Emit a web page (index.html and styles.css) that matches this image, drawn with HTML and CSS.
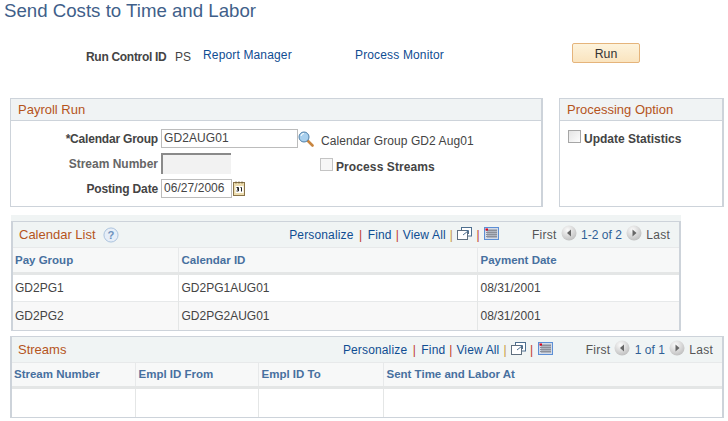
FILE: index.html
```html
<!DOCTYPE html>
<html lang="en">
<head>
<meta charset="utf-8">
<title>Send Costs to Time and Labor</title>
<link rel="stylesheet" href="styles.css">
</head>
<body>
<svg width="0" height="0" class="defs">
  <defs>
    <radialGradient id="orb" cx="40%" cy="30%" r="75%"><stop offset="0" stop-color="#fbfbfb"/><stop offset="1" stop-color="#bdbdbd"/></radialGradient>
    <symbol id="prev" viewBox="0 0 16 16"><circle cx="8" cy="8" r="7.5" fill="url(#orb)"/><path d="M10 4.5v7L6 8z" fill="#666"/></symbol>
    <symbol id="next" viewBox="0 0 16 16"><circle cx="8" cy="8" r="7.5" fill="url(#orb)"/><path d="M6.5 4.5v7l4-3.500z" fill="#666"/></symbol>
    <symbol id="zoom" viewBox="0 0 15 13"><rect x="4.500" y="0.500" width="10" height="8.500" fill="#fff" stroke="#4e6f8f"/><rect x="0.500" y="3.500" width="10" height="9" fill="#fff" stroke="#5f6f7f"/><path d="M6 8l5-4M8 3.500h3.500V7" fill="none" stroke="#4e6f8f"/></symbol>
    <symbol id="sheet" viewBox="0 0 15 13"><rect x="0.500" y="0.500" width="14" height="12" fill="#d3dbe8" stroke="#5c8fd6"/><path d="M2 3.500h11M2 5.500h11M2 7.500h11M2 9.500h11M4 2v9M6 2v9M8 2v9M10 2v9M12 2v9" stroke="#8b8f99" stroke-width="1"/><rect x="1.500" y="1.500" width="2.500" height="2" fill="#e0001b"/></symbol>
  </defs>
</svg>

<h1 class="page-title">Send Costs to Time and Labor</h1>

<div class="toolbar">
  <span class="label rc-label">Run Control ID</span>
  <span class="text rc-value">PS</span>
  <a class="link rm-link" href="#">Report Manager</a>
  <a class="link pm-link" href="#">Process Monitor</a>
  <button class="run-btn" type="button">Run</button>
</div>

<div class="panels">
  <section class="panel payroll">
    <h2 class="panel-head">Payroll Run</h2>
    <div class="form">
      <div class="form-row row-cal">
        <label class="label field-label cal-label">*Calendar Group</label>
        <span class="input input-cal">GD2AUG01</span>
        <svg class="lens" width="16" height="16" viewBox="0 0 16 16"><path d="M9.500 9.500L14.500 14.500" stroke="#c8853f" stroke-width="2.600" stroke-linecap="round"/><circle cx="6" cy="6" r="5" fill="#a9d0ee" stroke="#4f7fa8"/><path d="M3 5a3 3 0 0 1 3-2.500" stroke="#fff" fill="none"/></svg>
        <span class="text cal-desc">Calendar Group GD2 Aug01</span>
      </div>
      <div class="form-row row-stream">
        <label class="label field-label muted">Stream Number</label>
        <span class="input-disabled"></span>
        <span class="check disabled"></span>
        <span class="label check-label ps-label">Process Streams</span>
      </div>
      <div class="form-row row-date">
        <label class="label field-label date-label">Posting Date</label>
        <span class="input input-date">06/27/2006</span>
        <svg class="cal-icon" width="13" height="15" viewBox="0 0 13 15"><rect x="0.500" y="1.500" width="11" height="13" fill="#ecdcae" stroke="#8a7448"/><rect x="2.500" y="5" width="8" height="7" fill="#fff"/><path d="M3 0.500v2M6 0.500v2M9 0.500v2" stroke="#6b5a36"/><path d="M3.500 6.500h2v1.500h-1.500h1.500v2h-2M7.500 6.500h1v4" fill="none" stroke="#222"/></svg>
      </div>
    </div>
  </section>
  <section class="panel processing">
    <h2 class="panel-head">Processing Option</h2>
    <div class="option">
      <span class="check"></span>
      <span class="label check-label">Update Statistics</span>
    </div>
  </section>
</div>

<div class="calendar-wrap">
  <section class="grid grid-calendar">
    <div class="grid-head">
      <h2 class="grid-title">Calendar List</h2>
      <svg class="help" width="16" height="16" viewBox="0 0 17 17"><circle cx="8.500" cy="8.500" r="7.500" fill="#e6eef8" stroke="#a8c0dc"/><text x="8.500" y="12.500" text-anchor="middle" class="help-q">?</text></svg>
      <nav class="grid-nav">
        <a class="link" href="#">Personalize</a><i class="sep sep-wide">|</i><a class="link" href="#">Find</a><i class="sep">|</i><a class="link" href="#">View All</a><i class="sep sep-gold">|</i><svg class="nav-icon" width="15" height="13"><use href="#zoom"/></svg><i class="sep sep-icon">|</i><svg class="nav-icon" width="15" height="13"><use href="#sheet"/></svg>
        <span class="pager pager-cal"><span class="pg-word">First</span><svg class="orb" width="16" height="16"><use href="#prev"/></svg><span class="pg-count">1-2 of 2</span><svg class="orb" width="16" height="16"><use href="#next"/></svg><span class="pg-word">Last</span></span>
      </nav>
    </div>
    <table class="table">
      <colgroup><col class="c-a"><col class="c-b"><col></colgroup>
      <thead><tr><th>Pay Group</th><th>Calendar ID</th><th>Payment Date</th></tr></thead>
      <tbody>
        <tr class="odd"><td>GD2PG1</td><td>GD2PG1AUG01</td><td>08/31/2001</td></tr>
        <tr class="even"><td>GD2PG2</td><td>GD2PG2AUG01</td><td>08/31/2001</td></tr>
      </tbody>
    </table>
  </section>
</div>

<section class="grid grid-streams">
  <div class="grid-head">
    <h2 class="grid-title">Streams</h2>
    <nav class="grid-nav">
      <a class="link" href="#">Personalize</a><i class="sep sep-wide">|</i><a class="link" href="#">Find</a><i class="sep">|</i><a class="link" href="#">View All</a><i class="sep sep-gold">|</i><svg class="nav-icon" width="15" height="13"><use href="#zoom"/></svg><i class="sep sep-icon">|</i><svg class="nav-icon" width="15" height="13"><use href="#sheet"/></svg>
      <span class="pager pager-str"><span class="pg-word">First</span><svg class="orb" width="16" height="16"><use href="#prev"/></svg><span class="pg-count">1 of 1</span><svg class="orb" width="16" height="16"><use href="#next"/></svg><span class="pg-word">Last</span></span>
    </nav>
  </div>
  <table class="table table-streams">
    <colgroup><col class="s-a"><col class="s-b"><col class="s-c"><col></colgroup>
    <thead><tr><th>Stream Number</th><th>Empl ID From</th><th>Empl ID To</th><th>Sent Time and Labor At</th></tr></thead>
    <tbody><tr class="odd blank"><td></td><td></td><td></td><td></td></tr></tbody>
  </table>
</section>
</body>
</html>
```

FILE: styles.css
```css
* { box-sizing: border-box; }
html, body { margin: 0; padding: 0; }
body {
  width: 728px; height: 421px; overflow: hidden; background: #fff;
  font-family: "Liberation Sans", Arial, sans-serif; font-size: 12px; color: #444;
}
.defs { position: absolute; }
a { text-decoration: none; }
.page-title {
  margin: 0; padding: 0 0 0 4px; height: 43px; line-height: 22px;
  font-size: 18.670px; font-weight: normal; color: #3f5f8a;
}
.link { color: #0f4d92; letter-spacing: .15px; }
.label { font-weight: bold; color: #444; }
.text { color: #444; }

.toolbar { display: flex; align-items: flex-start; height: 55px; padding-left: 86px; }
.rc-label { margin-top: 7px; width: 89px; letter-spacing: -.3px; }
.rc-value { margin-top: 7px; width: 28px; }
.rm-link { margin-top: 5px; width: 152px; }
.pm-link { margin-top: 5px; width: 217px; }
.run-btn {
  width: 68px; height: 20px; padding: 1px 0 0; font: 12.300px "Liberation Sans", Arial, sans-serif; color: #333;
  border: 1px solid #e5b47b; border-radius: 2px;
  background: linear-gradient(#fdf3dc, #fae4bf);
}

.panels { display: flex; gap: 16px; padding-left: 10px; height: 117px; }
.panel { border: 1px solid #cdd3da; height: 109px; border-width: 1px 2px 1px 1px; }
.payroll { width: 533px; }
.processing { width: 165px; }
.panel-head {
  margin: 0; height: 21px; line-height: 21px; padding-left: 7px; font-size: 13px; font-weight: normal;
  color: #b5541c; background: #f0f3f4; border-bottom: 1px solid #cdd3da; box-sizing: content-box;
}
.form { padding-top: 5px; }
.form-row { display: flex; align-items: center; height: 25px; }
.field-label { width: 147px; text-align: right; }
.cal-label { letter-spacing: -.2px; }
.date-label { letter-spacing: -.15px; }
.muted { color: #666; }
.input {
  display: block; height: 19px; line-height: 17px; padding-left: 2px; margin-left: 3px;
  border: 1px solid #bcbcbc; color: #444; background: #fff;
}
.input-cal { width: 137px; letter-spacing: .1px; }
.input-date { width: 71px; letter-spacing: .05px; }
.lens { margin: 0; }
.cal-icon { margin-left: 1px; }
.cal-desc { margin-left: 7px; position: relative; top: 2px; letter-spacing: .08px; }
.input-disabled {
  display: block; width: 70px; height: 21px; margin-left: 3px; background: #f2f2f2;
  border-top: 2px solid #8a8a8a; border-left: 2px solid #8a8a8a;
}
.row-stream .check { margin: 2px 0 0 89px; }
.check {
  display: block; width: 13px; height: 13px; border: 1px solid #a6a6a6;
  background: linear-gradient(135deg, #e4e4e4, #fdfdfd);
}
.check.disabled { border-color: #c4c4c4; background: #f6f6f6; }
.check-label { margin-left: 4px; position: relative; top: 1px; }
.ps-label { margin-left: 3px; letter-spacing: .1px; top: 3px; }
.option { display: flex; padding: 9px 0 0 8px; }
.option .check-label { margin-left: 3px; top: 2px; }

.calendar-wrap { margin-left: 11px; width: 670px; padding-top: 6px; background: #f0f4f4; height: 116px; }
.grid { border: 2px solid #cdd3da; border-width: 1px 2px 2px 2px; }
.grid-calendar { height: 110px; }
.grid-streams { margin: 5px 0 0 10px; width: 714px; height: 82px; }
.grid-head { display: flex; align-items: center; height: 25px; background: #f0f4f4; }
.grid-title { margin: 0; padding-left: 6px; font-size: 13px; font-weight: normal; color: #b5541c; }
.help { margin-left: 7px; }
.help-q { font: bold 12px "Liberation Sans", Arial, sans-serif; fill: #6f93bd; }
.grid-nav { display: flex; align-items: center; margin-left: auto; padding-right: 9px; white-space: nowrap; }
.sep { font-style: normal; color: #c0392b; margin: 0 4px; }
.sep-wide { margin: 0 5.500px; }
.sep-icon { margin: 0 4.500px; }
.sep-gold { color: #c79a3a; }
.nav-icon { margin-top: -3px; }
.pager { display: flex; align-items: center; color: #555; }
.pager-cal { margin-left: 33px; }
.pager-str { margin-left: 33px; }
.pg-word { letter-spacing: .25px; }
.pg-count { color: #2f5f96; margin: 0 4.500px; }
.orb { margin: -4px 0 0 4px; }
.pg-count + .orb { margin-left: 0; margin-right: 4px; }

.table { width: 100%; border-collapse: collapse; table-layout: fixed; }
.c-a { width: 165px; }
.c-b { width: 299px; }
.s-a { width: 123px; }
.s-b { width: 123px; }
.s-c { width: 125px; }
.table th {
  height: 26px; padding: 0 2px 0 3px; text-align: left; font-size: 11.500px; color: #47709f;
  background: #f7f8f8; border-top: 1px solid #e7e9ea; border-left: 1px solid #e7e9ea;
  border-bottom: 3px solid #e4e6e6;
}
.table td { height: 28px; padding: 0 2px 0 3px; color: #444; border-left: 1px solid #e4e6e6; border-top: 1px solid #e7e9ea; }
.table th:first-child, .table td:first-child { border-left: 0; padding-left: 2px; }
.odd td { background: #fff; }
.even td { background: #f8f8f8; }
.table-streams th { height: 25px; padding-bottom: 2px; }
.table-streams td { height: 29px; }
```
